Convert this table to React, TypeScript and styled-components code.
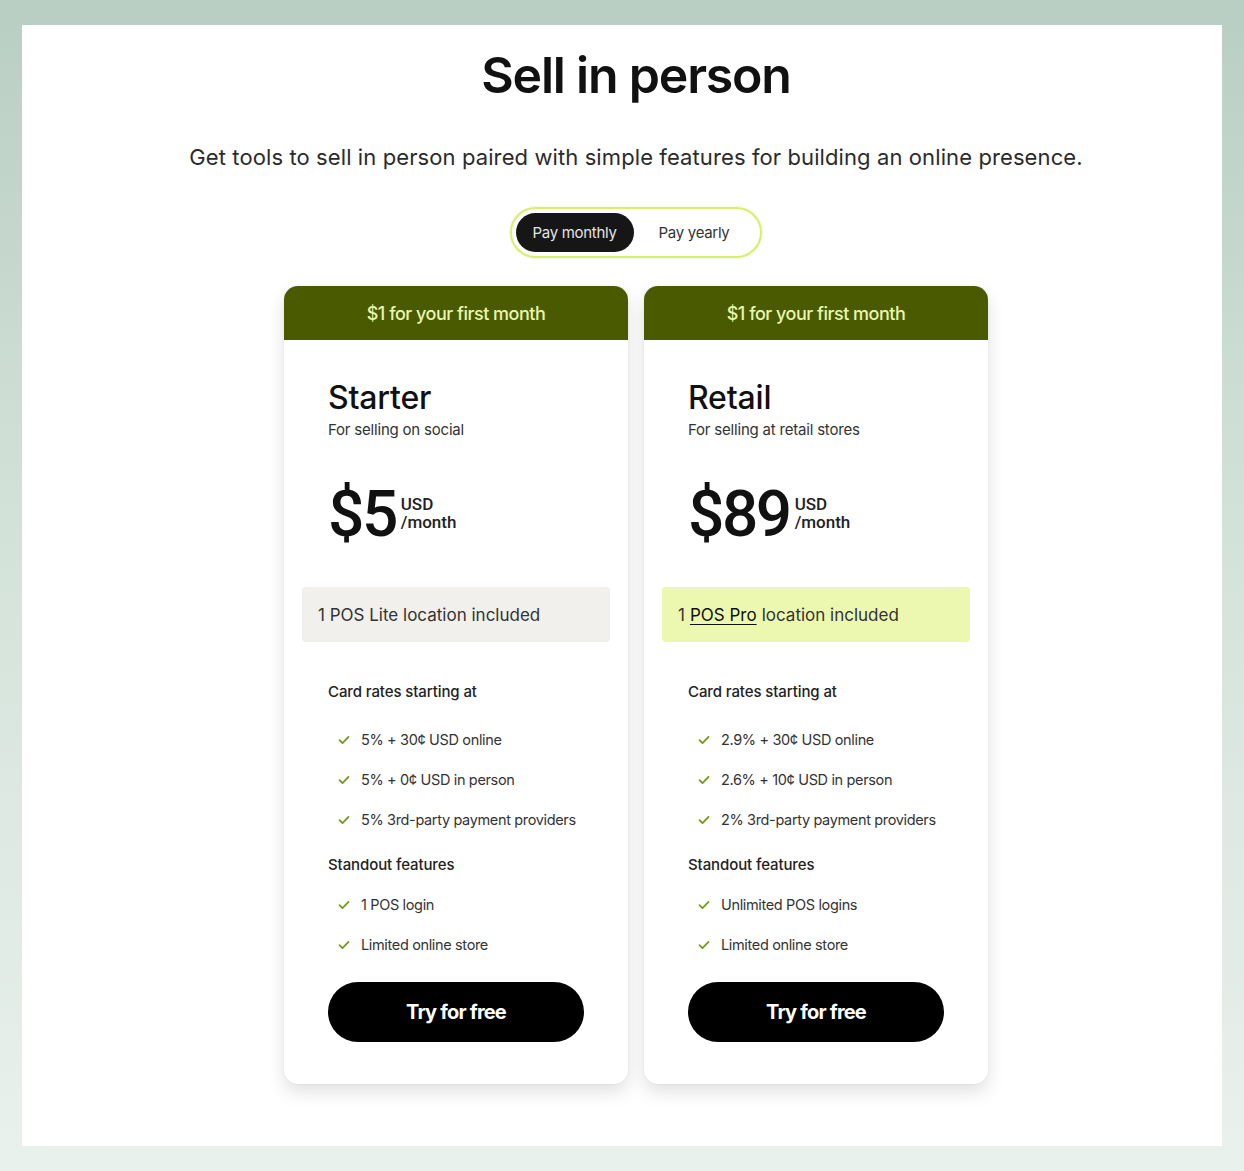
import * as React from 'react';
import styled, { createGlobalStyle } from 'styled-components';

const GlobalStyle = createGlobalStyle`
  html, body {
    margin: 0;
    padding: 0;
  }
  body {
    font-family: Inter, "Noto Sans", sans-serif;
    color: #111;
    background: linear-gradient(180deg, #b9cec2 0%, #d3e2d9 45%, #e9f1ec 100%);
    min-height: 1171px;
  }
`;

const Frame = styled.div`
  padding: 25px 22px 25px 22px;
`;

const Panel = styled.section`
  background: #fff;
  min-height: 1121px;
  box-sizing: border-box;
  display: flex;
  flex-direction: column;
  align-items: center;
  padding: 20px 0 0 28px;
`;

const Title = styled.h1`
  margin: 0;
  font-size: 50px;
  font-weight: 600;
  letter-spacing: -1.2px;
  line-height: 60px;
  color: #111;
`;

const Subtitle = styled.p`
  margin: 38px 0 0;
  font-size: 22px;
  font-weight: 400;
  letter-spacing: 0.1px;
  color: #2b2b2b;
  line-height: 28px;
`;

const Toggle = styled.div`
  margin-top: 36px;
  display: flex;
  align-items: center;
  padding: 4px;
  border: 2px solid #d8ef6c;
  border-radius: 27px;
  box-shadow: 0 0 2px rgba(200, 230, 90, 0.6);
`;

const ToggleOption = styled.button<{ $active?: boolean }>`
  border: none;
  font-family: inherit;
  font-size: 15px;
  letter-spacing: -0.3px;
  height: 39px;
  padding: ${({ $active }) => ($active ? '0 17px' : '0 27px 0 25px')};
  border-radius: 20px;
  background: ${({ $active }) => ($active ? '#161616' : 'transparent')};
  color: ${({ $active }) => ($active ? '#e4e4e4' : '#333')};
  cursor: pointer;
`;

const Cards = styled.div`
  margin-top: 28px;
  display: flex;
  gap: 16px;
`;

const Card = styled.article`
  width: 344px;
  border-radius: 14px;
  background: #fff;
  box-shadow: 0 8px 18px rgba(0, 0, 0, 0.12), 0 0 2px rgba(0, 0, 0, 0.08);
  overflow: hidden;
  padding-bottom: 42px;
`;

const Banner = styled.div`
  height: 54px;
  background: #4a5a00;
  color: #e8f6b0;
  display: flex;
  align-items: center;
  justify-content: center;
  font-size: 18px;
  font-weight: 500;
  letter-spacing: -0.5px;
`;

const Body = styled.div`
  padding: 39px 18px 0;
`;

const Inset = styled.div`
  padding: 0 26px;
`;

const PlanName = styled.h2`
  margin: 0;
  font-size: 32px;
  font-weight: 500;
  letter-spacing: -0.2px;
  line-height: 38px;
`;

const PlanNote = styled.div`
  font-size: 15px;
  color: #333;
  letter-spacing: -0.2px;
  margin-top: 3px;
`;

const PriceRow = styled.div`
  display: flex;
  align-items: flex-start;
  margin-top: 44px;
  gap: 5px;
`;

const Price = styled.div`
  font-family: Roboto, "Liberation Sans", sans-serif;
  font-size: 64px;
  font-weight: 500;
  letter-spacing: -2.5px;
  line-height: 64px;
`;

const PriceUnit = styled.div`
  font-family: Roboto, "Liberation Sans", sans-serif;
  font-size: 17px;
  font-weight: 500;
  line-height: 18px;
  margin-top: 12px;
  color: #222;
`;

const LocationBox = styled.div<{ $highlight?: boolean }>`
  margin-top: 40px;
  height: 55px;
  border-radius: 4px;
  background: ${({ $highlight }) => ($highlight ? '#ecf8b0' : '#f1f0ec')};
  display: flex;
  align-items: center;
  padding: 0 16px;
  font-size: 17px;
  color: #333;
  letter-spacing: 0;
`;

const Underlined = styled.span`
  color: #111;
  text-decoration: underline;
  text-underline-offset: 3px;
  margin: 0 5px;
`;

const SectionLabel = styled.div<{ $top: number }>`
  margin-top: ${({ $top }) => $top}px;
  font-size: 15px;
  font-weight: 500;
  color: #222;
  letter-spacing: -0.1px;
  line-height: 20px;
`;

const List = styled.ul<{ $top: number }>`
  list-style: none;
  margin: ${({ $top }) => $top}px 0 0;
  padding: 0;
  display: flex;
  flex-direction: column;
  gap: 20px;
`;

const Item = styled.li`
  display: flex;
  align-items: center;
  gap: 11px;
  padding-left: 10px;
  font-size: 14.5px;
  color: #333;
  line-height: 20px;
  letter-spacing: -0.35px;
  white-space: nowrap;
`;

const CtaButton = styled.button`
  margin-top: 27px;
  width: 256px;
  height: 60px;
  border: none;
  border-radius: 30px;
  background: #000;
  color: #fff;
  font-family: inherit;
  font-size: 20px;
  font-weight: 700;
  letter-spacing: -0.8px;
  cursor: pointer;
`;

const Check = () => (
  <svg width="12" height="12" viewBox="0 0 12 12" fill="none">
    <path d="M1.5 6.2l3 3L10.5 2.8" stroke="#6f9a1a" strokeWidth="1.7" strokeLinecap="round" strokeLinejoin="round" />
  </svg>
);

interface IPlan {
  name: string;
  note: string;
  price: string;
  location: React.ReactNode;
  highlight?: boolean;
  rates: string[];
  features: string[];
}

const plans: IPlan[] = [
  {
    name: 'Starter',
    note: 'For selling on social',
    price: '$5',
    location: <>1 POS Lite location included</>,
    rates: ['5% + 30¢ USD online', '5% + 0¢ USD in person', '5% 3rd-party payment providers'],
    features: ['1 POS login', 'Limited online store'],
  },
  {
    name: 'Retail',
    note: 'For selling at retail stores',
    price: '$89',
    highlight: true,
    location: (
      <>
        1<Underlined>POS Pro</Underlined>location included
      </>
    ),
    rates: ['2.9% + 30¢ USD online', '2.6% + 10¢ USD in person', '2% 3rd-party payment providers'],
    features: ['Unlimited POS logins', 'Limited online store'],
  },
];

const PlanCard: React.FunctionComponent<{ plan: IPlan }> = ({ plan }) => (
  <Card>
    <Banner>$1 for your first month</Banner>
    <Body>
      <Inset>
        <PlanName>{plan.name}</PlanName>
        <PlanNote>{plan.note}</PlanNote>
        <PriceRow>
          <Price>{plan.price}</Price>
          <PriceUnit>
            USD
            <br />
            /month
          </PriceUnit>
        </PriceRow>
      </Inset>
      <LocationBox $highlight={plan.highlight}>{plan.location}</LocationBox>
      <Inset>
        <SectionLabel $top={40}>Card rates starting at</SectionLabel>
        <List $top={28}>
          {plan.rates.map((r) => (
            <Item key={r}>
              <Check />
              {r}
            </Item>
          ))}
        </List>
        <SectionLabel $top={25}>Standout features</SectionLabel>
        <List $top={20}>
          {plan.features.map((f) => (
            <Item key={f}>
              <Check />
              {f}
            </Item>
          ))}
        </List>
        <CtaButton>Try for free</CtaButton>
      </Inset>
    </Body>
  </Card>
);

const App: React.FunctionComponent = () => (
  <>
    <GlobalStyle />
    <Frame>
      <Panel>
        <Title>Sell in person</Title>
        <Subtitle>Get tools to sell in person paired with simple features for building an online presence.</Subtitle>
        <Toggle>
          <ToggleOption $active>Pay monthly</ToggleOption>
          <ToggleOption>Pay yearly</ToggleOption>
        </Toggle>
        <Cards>
          {plans.map((p) => (
            <PlanCard key={p.name} plan={p} />
          ))}
        </Cards>
      </Panel>
    </Frame>
  </>
);

export default App;
